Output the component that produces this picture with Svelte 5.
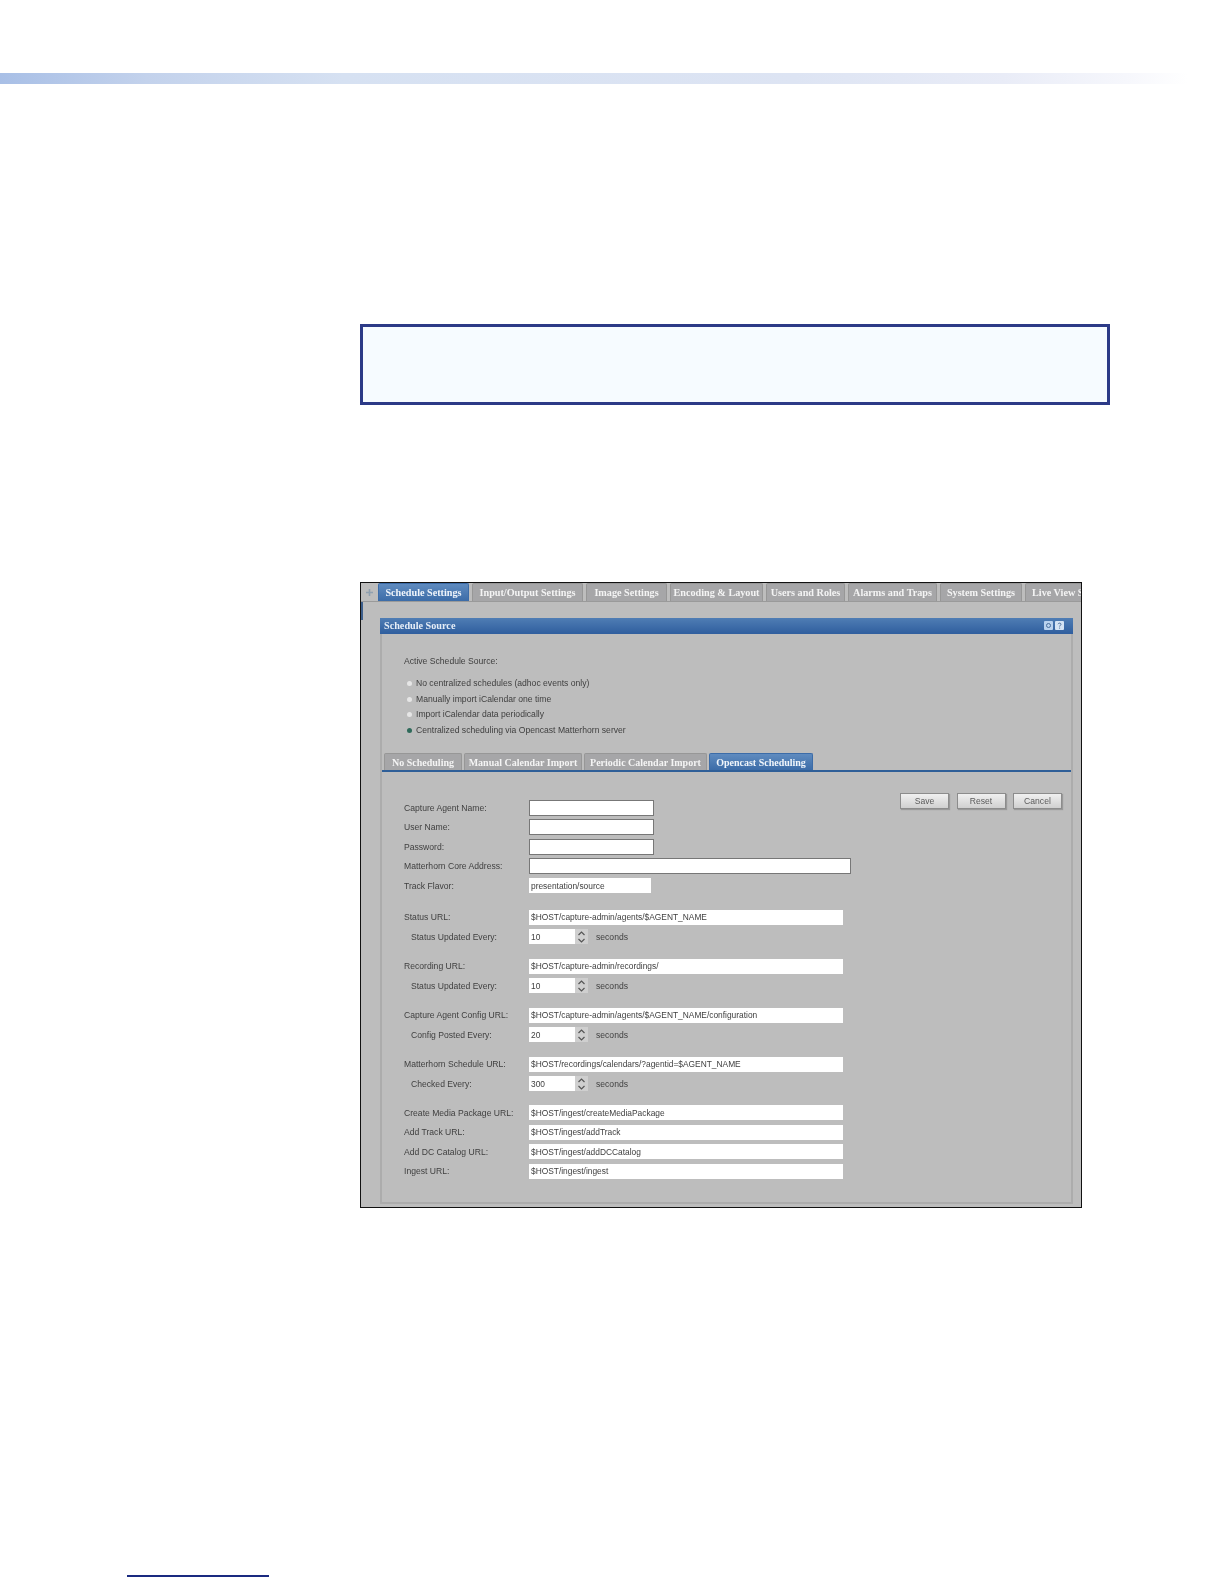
<script>
  const tabs = ['Schedule Settings','Input/Output Settings','Image Settings','Encoding & Layout','Users and Roles','Alarms and Traps','System Settings','Live View Settings'];
  const sources = ['No centralized schedules (adhoc events only)','Manually import iCalendar one time','Import iCalendar data periodically','Centralized scheduling via Opencast Matterhorn server'];
  const subtabs = ['No Scheduling','Manual Calendar Import','Periodic Calendar Import','Opencast Scheduling'];
  const groups = [
    [
      {l:'Capture Agent Name:',k:'box'},{l:'User Name:',k:'box'},{l:'Password:',k:'box'},
      {l:'Matterhorn Core Address:',k:'wide'},{l:'Track Flavor:',k:'track',v:'presentation/source'}
    ],
    [{l:'Status URL:',k:'url',v:'$HOST/capture-admin/agents/$AGENT_NAME'},{l:'Status Updated Every:',s:'10'}],
    [{l:'Recording URL:',k:'url',v:'$HOST/capture-admin/recordings/'},{l:'Status Updated Every:',s:'10'}],
    [{l:'Capture Agent Config URL:',k:'url',v:'$HOST/capture-admin/agents/$AGENT_NAME/configuration'},{l:'Config Posted Every:',s:'20'}],
    [{l:'Matterhorn Schedule URL:',k:'url',v:'$HOST/recordings/calendars/?agentid=$AGENT_NAME'},{l:'Checked Every:',s:'300'}],
    [
      {l:'Create Media Package URL:',k:'url',v:'$HOST/ingest/createMediaPackage'},
      {l:'Add Track URL:',k:'url',v:'$HOST/ingest/addTrack'},
      {l:'Add DC Catalog URL:',k:'url',v:'$HOST/ingest/addDCCatalog'},
      {l:'Ingest URL:',k:'url',v:'$HOST/ingest/ingest'}
    ]
  ];
</script>

<div class="page">
  <div class="banner"></div>
  <div class="note"></div>
  <div class="frame">
    <div class="shot">
      <div class="topbar">
        <div class="stub">
          <svg width="9" height="9" viewBox="0 0 9 9"><path d="M4.5 1v7M1 4.5h7" stroke="#8fa0b0" stroke-width="1.6"/></svg>
        </div>
        <div class="tabs">
          {#each tabs as t, i}
            <div class="tab" class:active={i === 0}>{t}</div>
          {/each}
        </div>
      </div>
      <div class="panel">
        <div class="head">
          <span>Schedule Source</span>
          <div class="tools">
            <svg width="9" height="9" viewBox="0 0 9 9"><rect width="9" height="9" rx="1" fill="#b9d2ee"/><circle cx="4.5" cy="4.5" r="2" fill="none" stroke="#4a6f9c"/></svg>
            <svg width="9" height="9" viewBox="0 0 9 9"><rect width="9" height="9" rx="1" fill="#d5e4f4"/><path d="M3 3.2c.5-1.5 3-1.4 3 .1 0 1-1.4 1-1.4 2.2M4.6 6.6v1" fill="none" stroke="#4a6f9c"/></svg>
          </div>
        </div>
        <div class="source">
          <div class="line">Active Schedule Source:</div>
          <div class="radios">
            {#each sources as s, i}
              <div class="radio"><span class="dot" class:on={i === 3}></span>{s}</div>
            {/each}
          </div>
        </div>
        <div class="subtabs">
          {#each subtabs as t, i}
            <div class="tab sub" class:active={i === 3}>{t}</div>
          {/each}
        </div>
        <div class="content">
          <div class="form">
            {#each groups as g}
              <div class="group">
                {#each g as r}
                  <div class="row">
                    <label class:indent={r.s}>{r.l}</label>
                    {#if r.s}
                      <input class="num" value={r.s} readonly />
                      <span class="spin">
                        <svg width="9" height="14" viewBox="0 0 9 14"><path d="M1.5 5 4.5 2l3 3M1.5 9l3 3 3-3" fill="none" stroke="#555" stroke-width="1.2"/></svg>
                      </span>
                      <span class="unit">seconds</span>
                    {:else}
                      <input class={r.k} value={r.v ?? ''} readonly />
                    {/if}
                  </div>
                {/each}
              </div>
            {/each}
          </div>
          <div class="buttons">
            <div class="btn">Save</div>
            <div class="btn">Reset</div>
            <div class="btn">Cancel</div>
          </div>
        </div>
      </div>
    </div>
  </div>
  <div class="rule"></div>
</div>

<style>
  :global(body) { margin: 0; background: #fff; }
  .page { width: 1224px; height: 1584px; overflow: hidden; display: flex; flex-direction: column; align-items: flex-start; font-family: "Liberation Sans", sans-serif; }
  .banner { margin-top: 73px; width: 100%; height: 11px; background: linear-gradient(90deg, #a8bfe6 0%, #c3d2ec 12%, #d6e1f2 28%, #dde4f3 65%, #e9ecf7 82%, #f6f7fc 92%, #fff 97%); }
  .note { margin: 240px 0 0 360px; width: 750px; height: 81px; box-sizing: border-box; border: 3px solid #2c3a87; background: #f6fbff; }
  .frame { margin: 177px 0 0 360px; width: 722px; height: 626px; box-sizing: border-box; border: 1.5px solid #111; background: #bdbdbd; overflow: hidden; }
  .shot { height: 100%; filter: blur(0.7px); color: #404040; font-size: 8.6px; position: relative; }
  .shot::before { content: ""; position: absolute; left: 0; top: 19px; width: 2px; height: 18px; background: #3d5f8c; }
  .topbar { display: flex; height: 18px; border-bottom: 1px solid #9a9a9a; }
  .stub { width: 17px; flex: none; display: flex; align-items: center; justify-content: center; }
  .tabs { display: grid; grid-template-columns: 91px 111px 81px 93px 79px 89px 82px 60px; column-gap: 3px; flex: 1; overflow: hidden; }
  .tab { background: #a6a6a8; color: #f4f4f4; font-family: "Liberation Serif", "DejaVu Serif", serif; font-weight: 700; font-size: 10.2px; line-height: 18px; text-align: center; white-space: nowrap; overflow: hidden; border-radius: 2px 2px 0 0; border: 1px solid #979797; border-bottom: 0; box-sizing: border-box; }
  .tabs .tab:last-child { text-align: left; padding-left: 6px; }
  .tab.active { background: linear-gradient(#5f8bbf, #3c6ca8); border-color: #3c6ca8; color: #f0f5fb; }
  .panel { margin: 15.5px 0 0 19px; width: 693px; height: 586px; box-sizing: border-box; border: 1px solid #acacac; border-width: 0 2px 2px 2px; }
  .head { margin: 0 -2px; height: 16px; background: linear-gradient(#4f7db4, #2f5e9e); color: #e6eef7; font-family: "Liberation Serif", "DejaVu Serif", serif; font-weight: 700; font-size: 10.2px; line-height: 16px; padding: 0 9px 0 4px; display: flex; justify-content: space-between; align-items: center; }
  .tools { display: flex; gap: 2px; }
  .source { padding: 20px 0 0 22px; }
  .line { line-height: 15px; }
  .radios { margin-top: 7.5px; display: flex; flex-direction: column; }
  .radio { height: 15.5px; line-height: 15.5px; display: flex; align-items: center; gap: 4px; white-space: nowrap; padding-left: 3px; }
  .dot { width: 5px; height: 5px; border-radius: 50%; background: #e6e6e6; flex: none; }
  .dot.on { background: #2f6a5a; }
  .subtabs { margin-top: 14.5px; padding-left: 2px; display: grid; grid-template-columns: 78px 118px 123px 104px; column-gap: 2px; height: 17px; border-bottom: 2px solid #2f5f98; }
  .sub { line-height: 17px; font-size: 10px; }
  .content { display: flex; justify-content: space-between; align-items: flex-start; padding: 21px 9px 0 22px; }
  .form { margin-top: 7.5px; display: flex; flex-direction: column; gap: 14.4px; }
  .group { display: flex; flex-direction: column; gap: 4.5px; }
  .group:first-child { margin-bottom: 2.5px; }
  .row { display: flex; align-items: center; height: 15px; }
  label { width: 125px; flex: none; white-space: nowrap; }
  label.indent { padding-left: 7px; box-sizing: border-box; }
  input { box-sizing: border-box; height: 15px; margin: 0; padding: 0 0 0 2px; border: 0; outline: 0; background: #fff; color: #404040; font: 8.4px "Liberation Sans", sans-serif; border-radius: 0; }
  input.box, input.wide { height: 16px; border: 1px solid #777; }
  input.box { width: 125px; }
  input.wide { width: 322px; }
  input.track { width: 122px; }
  input.url { width: 314px; }
  input.num { width: 46px; }
  .spin { width: 13px; height: 15px; background: #cfcfcf; display: flex; align-items: center; justify-content: center; }
  .unit { margin-left: 8px; }
  .buttons { display: flex; gap: 7.5px; }
  .btn { width: 49px; height: 16px; box-sizing: border-box; border: 1px solid #8c8c8c; background: linear-gradient(#f0f0f0, #d0d0d0); text-align: center; line-height: 14px; color: #5a5a5a; box-shadow: 1px 1px 1px #999; }
  .rule { margin: 367px 0 0 127px; width: 142px; height: 1.5px; background: #1a2a80; }
</style>
